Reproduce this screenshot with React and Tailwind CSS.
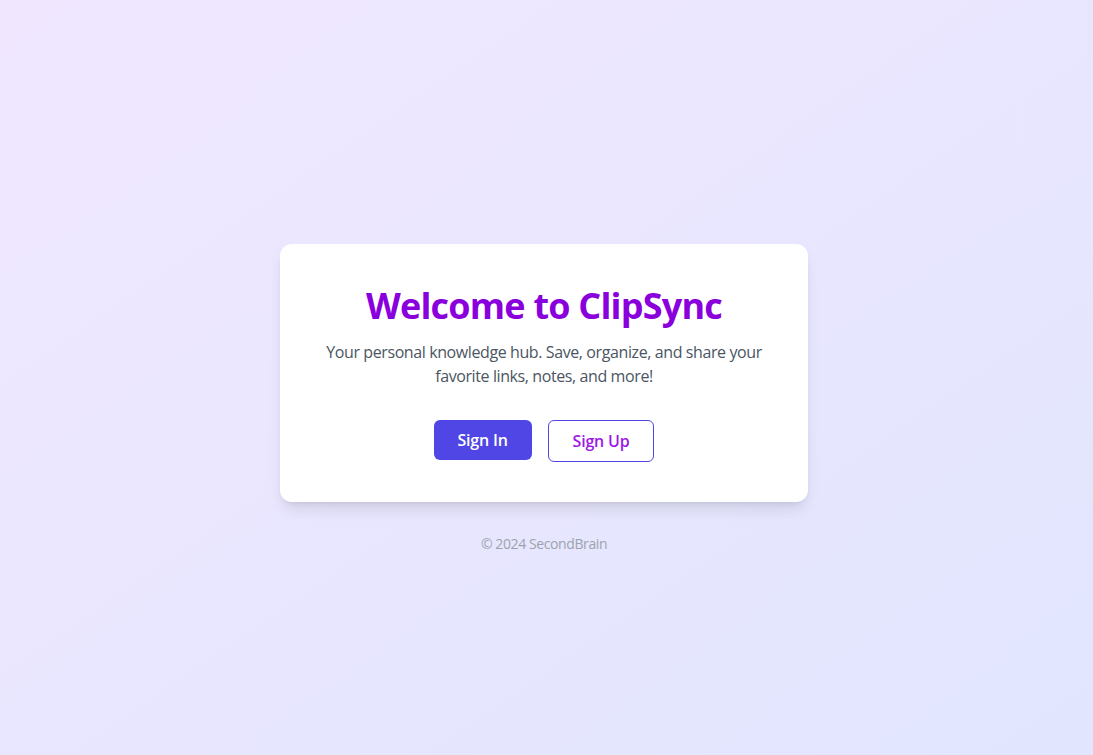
import React from "react";

const App = () => {
  return (
    <div
      className="min-h-screen w-full flex flex-col items-center pt-[244px] pr-[5px] bg-gradient-to-br from-[#f0e7ff] to-[#e1e6fe]"
      style={{ fontFamily: '"Segoe UI", "Open Sans", sans-serif' }}
    >
      {/* Card */}
      <div className="w-[528px] bg-white rounded-xl shadow-lg p-10 flex flex-col items-center text-center">
        <h1 className="text-4xl leading-[44px] font-bold tracking-[-0.8px] text-[#8a00dc] mb-3">Welcome to ClipSync</h1>
        <p className="text-base leading-6 tracking-[-0.4px] text-[#4b5563] mb-8">
          Your personal knowledge hub. Save, organize, and share your favorite links, notes, and more!
        </p>
        <div className="flex items-start gap-4">
          <button className="h-10 px-6 rounded-md bg-[#5046e5] text-white font-semibold tracking-[-0.2px]">Sign In</button>
          <button className="h-[42px] px-6 rounded-md border border-[#5046e5] text-[#9d17e8] font-semibold tracking-[-0.2px] bg-white">
            Sign Up
          </button>
        </div>
      </div>

      {/* Footer */}
      <p className="mt-8 text-sm tracking-[-0.4px] text-[#9ca3af]">© 2024 SecondBrain</p>
    </div>
  );
};

export default App;
